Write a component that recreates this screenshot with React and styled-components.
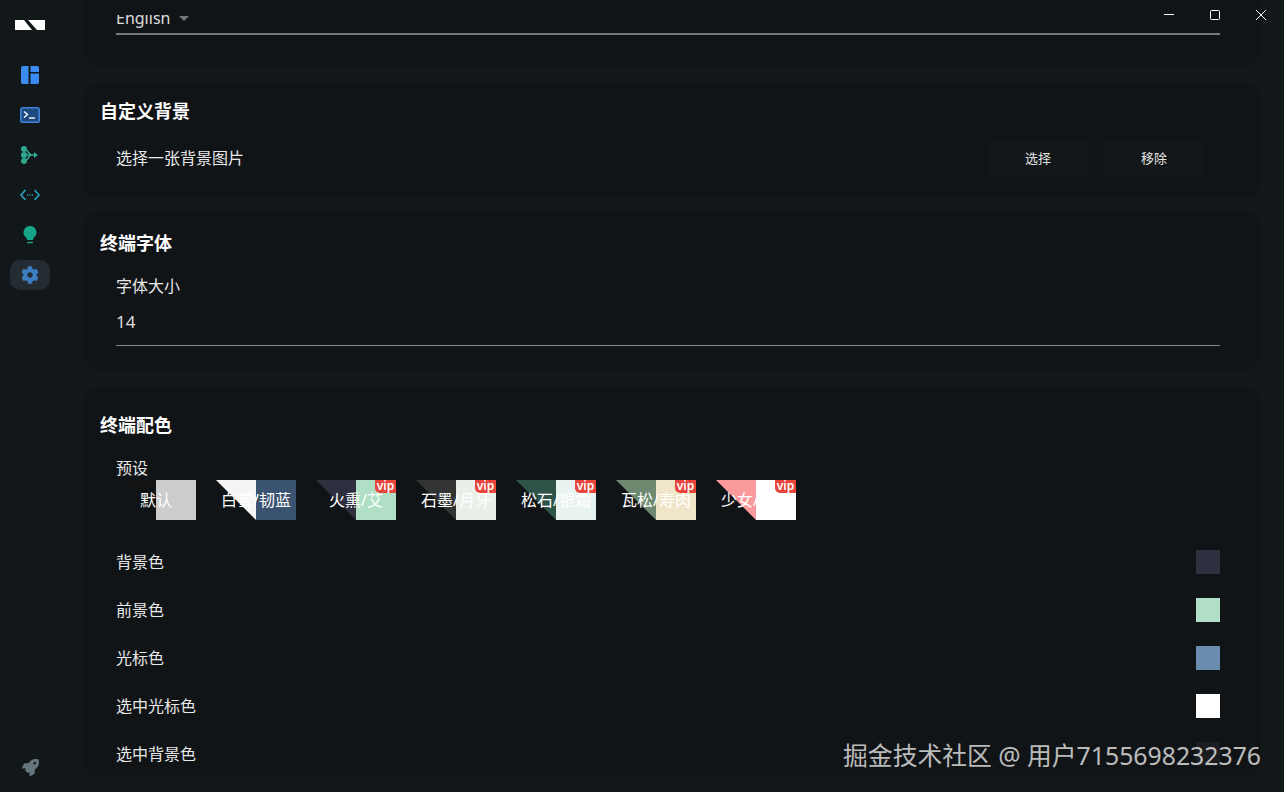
import styled, { createGlobalStyle } from "styled-components";
import { FaCog, FaRocket } from "react-icons/fa";

const presets = [
  { name: "默认", left: "#111315", right: "#cccccc" },
  { name: "白雪/韧蓝", left: "#f5f5f5", right: "#3a5371" },
  { name: "火熏/艾", left: "#2e2f3f", right: "#b0dfc6", vip: true },
  { name: "石墨/月牙", left: "#333535", right: "#e9efe9", vip: true },
  { name: "松石/银霜", left: "#2e5349", right: "#e8f3f1", vip: true },
  { name: "瓦松/寿肉", left: "#6d8a70", right: "#efe6c9", vip: true },
  { name: "少女/纯白", left: "#fa9a9c", right: "#ffffff", vip: true },
];

const colors = [
  { name: "背景色", value: "#2e2f3f" },
  { name: "前景色", value: "#b0dfc6" },
  { name: "光标色", value: "#6a8caf" },
  { name: "选中光标色", value: "#ffffff" },
  { name: "选中背景色", value: "#1b1d20" },
];

const App = () => {
  return (
    <Page>
      <GlobalStyle />
      <Sidebar>
        <Logo viewBox="0 0 30 10">
          <polygon points="0,0 9,0 17,10 0,10" fill="#fff" />
          <polygon points="13,0 30,0 30,10 22,10" fill="#fff" />
        </Logo>
        <NavList>
          <NavItem>
            <svg width="18" height="18" viewBox="0 0 18 18" fill="#3b8bf0">
              <path d="M2 0h5.500v18H2a2 2 0 0 1-2-2V2a2 2 0 0 1 2-2z" />
              <path d="M9.500 0H16a2 2 0 0 1 2 2v4H9.500z" />
              <path d="M9.500 7.500H18V16a2 2 0 0 1-2 2H9.500z" />
            </svg>
          </NavItem>
          <NavItem>
            <svg width="20" height="16" viewBox="0 0 20 16">
              <rect x="0.8" y="0.8" width="18.4" height="14.4" rx="2" fill="#1f4a80" stroke="#3f82d8" strokeWidth="1.6" />
              <path d="M4 4.500 7.500 7.500 4 10.500" fill="none" stroke="#fff" strokeWidth="1.4" />
              <path d="M9 11h6" stroke="#fff" strokeWidth="1.4" />
            </svg>
          </NavItem>
          <NavItem>
            <svg width="18" height="18" viewBox="0 0 18 18" fill="none" stroke="#2fa78f" strokeWidth="1.7">
              <circle cx="3" cy="3" r="2.2" fill="#2fa78f" />
              <circle cx="3" cy="9" r="2.2" fill="#2fa78f" />
              <circle cx="3" cy="15" r="2.2" fill="#2fa78f" />
              <path d="M4 3.500C8 4 7 9 11 9M4 14.500C8 14 7 9 11 9M4 9h10" />
              <path d="M13 6l4 3-4 3z" fill="#2fa78f" stroke="none" />
            </svg>
          </NavItem>
          <NavItem>
            <svg width="20" height="12" viewBox="0 0 20 12" fill="none" stroke="#2a9db5" strokeWidth="1.7">
              <path d="M5.500 1 1 6l4.500 5M14.500 1 19 6l-4.500 5" />
              <path d="M7 6h1.200M9.400 6h1.200M11.800 6H13" strokeWidth="1.500" />
            </svg>
          </NavItem>
          <NavItem>
            <svg width="14" height="18" viewBox="0 0 14 18" fill="#17a589">
              <path d="M7 0a6.500 6.500 0 0 1 4 11.600c-.7.6-1 1.400-1 2.400H4c0-1-.3-1.800-1-2.400A6.500 6.500 0 0 1 7 0z" />
              <rect x="4" y="15.800" width="6" height="1.400" rx=".7" />
            </svg>
          </NavItem>
          <NavItem $active>
            <FaCog size={18} color="#3c7fc0" />
          </NavItem>
        </NavList>
        <RocketSlot>
          <FaRocket size={17} color="#64767c" />
        </RocketSlot>
      </Sidebar>

      <Main>
        <TopStrip />
        <ScrollArea>
          <LanguageCard>
            <SelectBox>
              English
              <Caret />
            </SelectBox>
          </LanguageCard>

          <BackgroundCard>
            <CardTitle>自定义背景</CardTitle>
            <ButtonRow>
              <RowLabel>选择一张背景图片</RowLabel>
              <Buttons>
                <GhostButton>选择</GhostButton>
                <GhostButton>移除</GhostButton>
              </Buttons>
            </ButtonRow>
          </BackgroundCard>

          <FontCard>
            <CardTitle>终端字体</CardTitle>
            <Field>
              <RowLabel>字体大小</RowLabel>
              <NumberValue>14</NumberValue>
            </Field>
          </FontCard>

          <ColorCard>
            <CardTitle>终端配色</CardTitle>
            <Field>
              <PresetLabel>预设</PresetLabel>
              <PresetList>
                {presets.map(({ name, left, right, vip }) => (
                  <Preset key={name} $right={right}>
                    <PresetCorner $left={left} />
                    <PresetName>{name}</PresetName>
                    {vip && <VipBadge>vip</VipBadge>}
                  </Preset>
                ))}
              </PresetList>
            </Field>
            <ColorList>
              {colors.map(({ name, value }) => (
                <ColorRow key={name}>
                  <RowLabel>{name}</RowLabel>
                  <ColorChip $color={value} />
                </ColorRow>
              ))}
            </ColorList>
          </ColorCard>
        </ScrollArea>
      </Main>

      <WindowControls>
        <WindowButton>
          <svg width="10" height="10" viewBox="0 0 10 10">
            <path d="M0 4.500h10" stroke="#fff" strokeWidth="1" />
          </svg>
        </WindowButton>
        <WindowButton>
          <svg width="10" height="10" viewBox="0 0 10 10">
            <rect x=".5" y=".5" width="9" height="9" rx="1" fill="none" stroke="#fff" />
          </svg>
        </WindowButton>
        <WindowButton>
          <svg width="10" height="10" viewBox="0 0 10 10">
            <path d="M0 0l10 10M10 0 0 10" stroke="#fff" strokeWidth="1" />
          </svg>
        </WindowButton>
      </WindowControls>

      <Watermark>掘金技术社区 @ 用户7155698232376</Watermark>
    </Page>
  );
};

export default App;

const GlobalStyle = createGlobalStyle`
  html, body {
    margin: 0;
    height: 100%;
    overflow: hidden;
    background: #12181a;
  }
  * {
    box-sizing: border-box;
  }
`;

const Page = styled.div`
  position: relative;
  display: flex;
  width: 1284px;
  height: 792px;
  overflow: hidden;
  background: #12181a;
  color: #f0f0f0;
  font-family: "Noto Sans", "Noto Sans CJK SC", sans-serif;
  font-size: 16px;
`;

const Sidebar = styled.aside`
  display: flex;
  flex-direction: column;
  align-items: center;
  flex: 0 0 60px;
  padding-top: 20px;
  padding-bottom: 16px;
`;

const Logo = styled.svg`
  display: block;
  width: 30px;
  height: 10px;
`;

const NavList = styled.nav`
  display: flex;
  flex-direction: column;
  align-items: center;
  margin-top: 30px;
  gap: 10px;
`;

const NavItem = styled.div`
  display: flex;
  align-items: center;
  justify-content: center;
  width: 40px;
  height: 30px;
  border-radius: 10px;
  background: ${(p) => (p.$active ? "#242b33" : "transparent")};
`;

const RocketSlot = styled.div`
  display: flex;
  margin-top: auto;
`;

const Main = styled.main`
  display: flex;
  flex-direction: column;
  flex: 1;
  min-width: 0;
  padding: 0 24px 15px;
`;

const TopStrip = styled.div`
  flex: 0 0 15px;
  background: #111416;
`;

const ScrollArea = styled.div`
  display: flex;
  flex-direction: column;
  flex: 1;
  min-height: 0;
  overflow: hidden;
`;

const Card = styled.section`
  flex: none;
  background: #111416;
  border-radius: 14px;
`;

const LanguageCard = styled(Card)`
  height: 72px;
  margin-top: -21px;
  padding: 13px 40px 0 32px;
  border-radius: 0 0 14px 14px;
`;

const BackgroundCard = styled(Card)`
  height: 114px;
  margin-top: 18px;
  padding: 15px 16px 0;
`;

const FontCard = styled(Card)`
  height: 158px;
  margin-top: 14px;
  padding: 19px 16px 0;
`;

const ColorCard = styled(Card)`
  flex: 1;
  margin-top: 18px;
  padding: 25px 16px 0;
`;

const CardTitle = styled.h3`
  margin: 0;
  font-size: 18px;
  line-height: 24px;
  font-weight: 700;
  color: #fff;
`;

const SelectBox = styled.div`
  display: flex;
  align-items: center;
  gap: 9px;
  height: 28px;
  padding-bottom: 4px;
  border-bottom: 2px solid #777;
  font-size: 16px;
  color: #ddd;
`;

const Caret = styled.span`
  width: 0;
  height: 0;
  border-left: 5px solid transparent;
  border-right: 5px solid transparent;
  border-top: 5px solid #777;
`;

const RowLabel = styled.div`
  font-size: 16px;
  line-height: 24px;
  color: #e8e8e8;
`;

const ButtonRow = styled.div`
  display: flex;
  align-items: center;
  justify-content: space-between;
  margin-top: 17px;
  padding: 0 40px 0 16px;
`;

const Buttons = styled.div`
  display: flex;
  gap: 16px;
`;

const GhostButton = styled.button`
  width: 100px;
  height: 36px;
  padding: 0 0 2px;
  border: none;
  border-radius: 8px;
  background: #141719;
  color: #e4e4e4;
  font-family: inherit;
  font-size: 13px;
`;

const Field = styled.div`
  margin: 19px 24px 0 16px;
`;

const NumberValue = styled.div`
  height: 48px;
  padding-top: 12px;
  border-bottom: 1px solid #888;
  font-size: 17px;
  line-height: 24px;
  color: #ddd;
`;

const PresetLabel = styled(RowLabel)`
  height: 24px;
`;

const PresetList = styled.div`
  display: flex;
  gap: 20px;
`;

const Preset = styled.div`
  position: relative;
  width: 80px;
  height: 40px;
  background: linear-gradient(to right, transparent 50%, ${(p) => p.$right} 50%);
`;

const PresetCorner = styled.div`
  position: absolute;
  top: 0;
  left: 0;
  width: 50%;
  height: 100%;
  background: ${(p) => p.$left};
  clip-path: polygon(0 0, 100% 0, 100% 100%);
`;

const PresetName = styled.span`
  position: absolute;
  inset: 0 0 2px;
  display: flex;
  align-items: center;
  justify-content: center;
  white-space: nowrap;
  font-size: 16px;
  color: #fff;
`;

const VipBadge = styled.span`
  position: absolute;
  top: 0;
  right: 0;
  width: 21px;
  height: 13px;
  border-bottom-left-radius: 5px;
  background: #e8453c;
  color: #fff;
  font-size: 12px;
  font-weight: 600;
  line-height: 11px;
  text-align: center;
`;

const ColorList = styled.div`
  display: flex;
  flex-direction: column;
  gap: 24px;
  margin: 30px 24px 0 16px;
`;

const ColorRow = styled.div`
  display: flex;
  align-items: center;
  justify-content: space-between;
  height: 24px;
`;

const ColorChip = styled.div`
  width: 24px;
  height: 24px;
  background: ${(p) => p.$color};
`;

const WindowControls = styled.div`
  position: absolute;
  top: 10px;
  right: 18px;
  display: flex;
  gap: 36px;
`;

const WindowButton = styled.div`
  display: flex;
  width: 10px;
  height: 10px;
`;

const Watermark = styled.div`
  position: absolute;
  right: 23px;
  bottom: 20px;
  font-size: 24.8px;
  line-height: 34px;
  white-space: nowrap;
  color: rgba(255, 255, 255, 0.72);
`;
